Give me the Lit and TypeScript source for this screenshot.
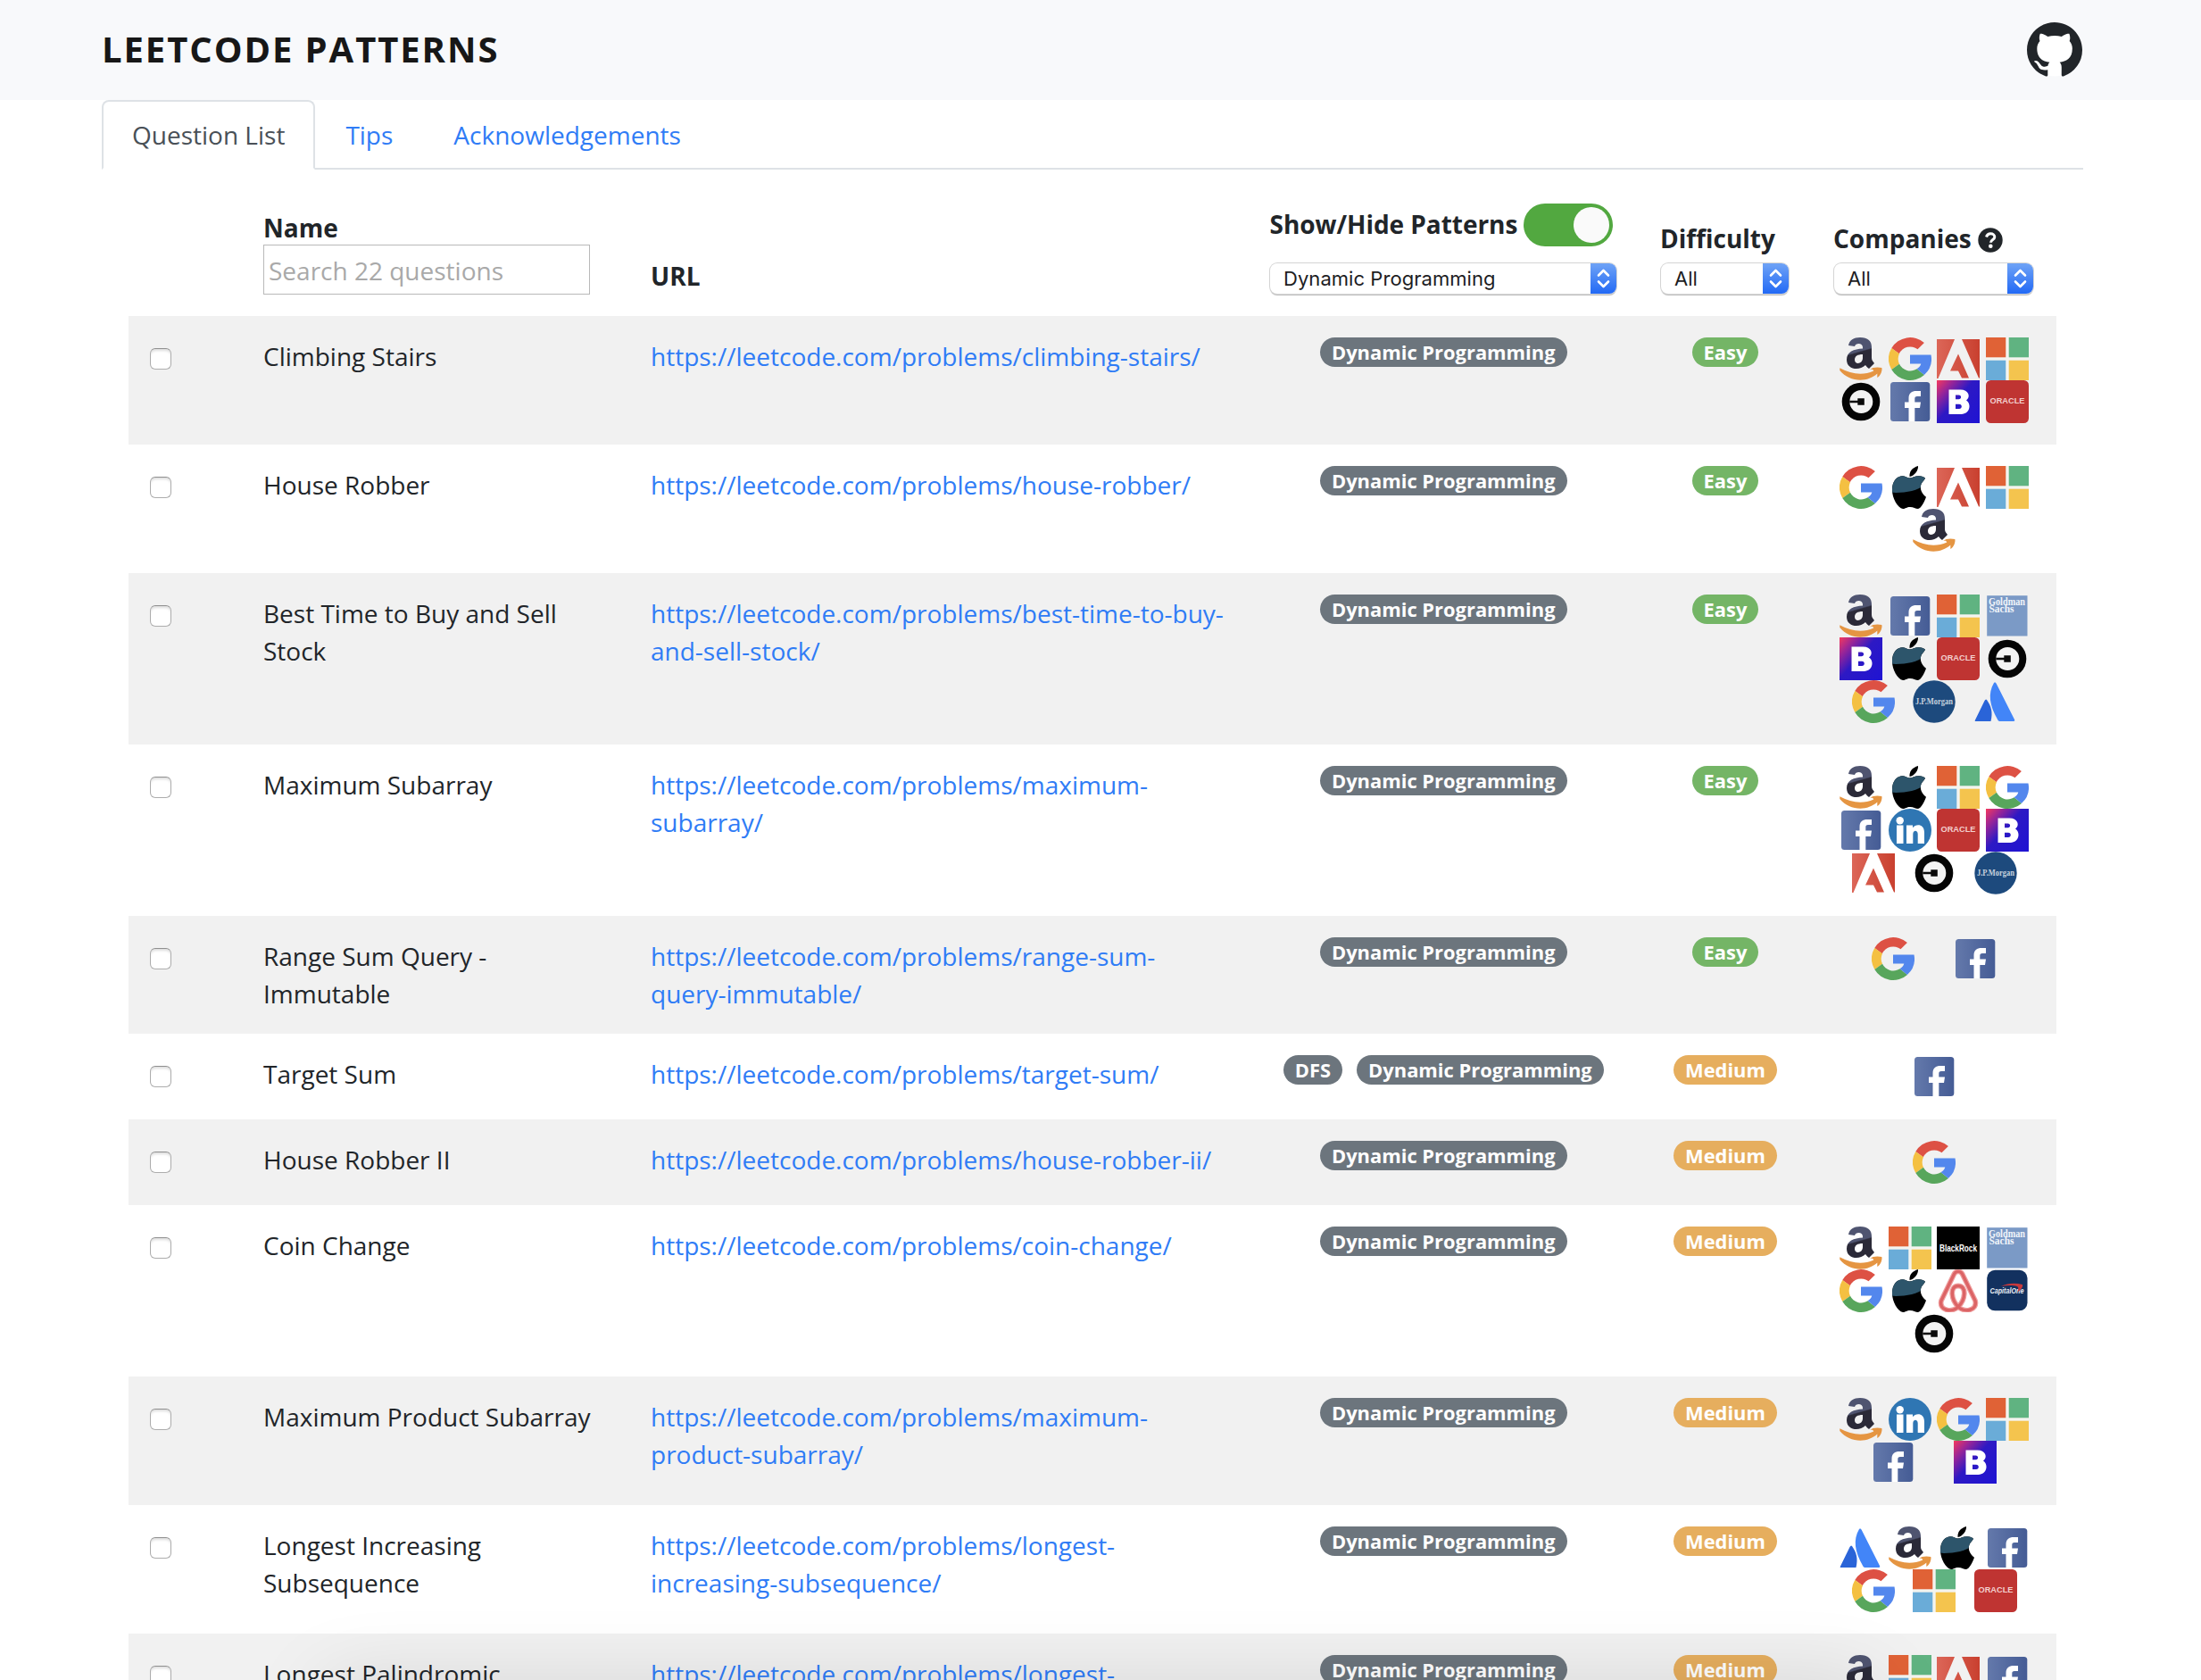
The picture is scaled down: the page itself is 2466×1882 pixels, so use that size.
import { LitElement, html, css, svg } from "lit";
import { customElement } from "lit/decorators.js";

type Row = { name: string; slug: string; patterns: string[]; level: "Easy" | "Medium"; companies: string[] };

const DP = "Dynamic Programming";
const rows: Row[] = [
  { name: "Climbing Stairs", slug: "climbing-stairs", patterns: [DP], level: "Easy", companies: ["amazon", "google", "adobe", "microsoft", "uber", "facebook", "bloomberg", "oracle"] },
  { name: "House Robber", slug: "house-robber", patterns: [DP], level: "Easy", companies: ["google", "apple", "adobe", "microsoft", "amazon"] },
  { name: "Best Time to Buy and Sell Stock", slug: "best-time-to-buy-and-sell-stock", patterns: [DP], level: "Easy", companies: ["amazon", "facebook", "microsoft", "goldman", "bloomberg", "apple", "oracle", "uber", "google", "jpmorgan", "atlassian"] },
  { name: "Maximum Subarray", slug: "maximum-subarray", patterns: [DP], level: "Easy", companies: ["amazon", "apple", "microsoft", "google", "facebook", "linkedin", "oracle", "bloomberg", "adobe", "uber", "jpmorgan"] },
  { name: "Range Sum Query - Immutable", slug: "range-sum-query-immutable", patterns: [DP], level: "Easy", companies: ["google", "facebook"] },
  { name: "Target Sum", slug: "target-sum", patterns: ["DFS", DP], level: "Medium", companies: ["facebook"] },
  { name: "House Robber II", slug: "house-robber-ii", patterns: [DP], level: "Medium", companies: ["google"] },
  { name: "Coin Change", slug: "coin-change", patterns: [DP], level: "Medium", companies: ["amazon", "microsoft", "blackrock", "goldman", "google", "apple", "airbnb", "capitalone", "uber"] },
  { name: "Maximum Product Subarray", slug: "maximum-product-subarray", patterns: [DP], level: "Medium", companies: ["amazon", "linkedin", "google", "microsoft", "facebook", "bloomberg"] },
  { name: "Longest Increasing Subsequence", slug: "longest-increasing-subsequence", patterns: [DP], level: "Medium", companies: ["atlassian", "amazon", "apple", "facebook", "google", "microsoft", "oracle"] },
  { name: "Longest Palindromic Substring", slug: "longest-palindromic-substring", patterns: [DP], level: "Medium", companies: ["amazon", "microsoft", "adobe", "facebook"] },
];

const art: Record<string, unknown> = {
  amazon: svg`
    <defs><linearGradient id="am" x1="0" y1="0" x2="0.25" y2="1"><stop offset=".52" stop-color="#4f5470"/><stop offset=".56" stop-color="#2b2a38"/></linearGradient></defs>
    <path fill="url(#am)" d="M10 9C11 3 16 0 23 0c9 0 13 4 13 11v12c0 3 2 4 3 6l-6 6c-2-1-3-3-4-4-7 7-21 5-21-6 0-9 8-12 18-12.500V11c0-5-8-5-9-1zM26 19c-6 0-9 2-9 6 0 6 9 5 9-2z"/>
    <path fill="#e59542" d="M.3 34.300c13 7 26 8.500 38 3.200l-1-1.500c-1.500-.5-2 0-3 0 2-2.800 9-3 13-2 .8 3-1 9-5 11 0-2 0-3 0-4.500C31 51 11 50 .3 37z"/>`,
  google: svg`
    <path fill="#dd5144" d="M3.300 12A24 24 0 0 1 39.900 6.100L32.500 13.300A13.600 13.600 0 0 0 11.800 18.300z"/>
    <path fill="#f4c042" d="M3.300 12L12 18.200a13.600 13.600 0 0 0 0 11.600L3.300 36a24 24 0 0 1 0-24z"/>
    <path fill="#58a65c" d="M3.300 36L12 29.700A13.600 13.600 0 0 0 31.600 35.300L40 41.900A24 24 0 0 1 3.300 36z"/>
    <path fill="#5387ed" d="M24 19.500h23.500A24 24 0 0 1 39.900 42L31.600 35.300c2.500-1.500 4-3.500 4.700-5.800H24z"/>`,
  adobe: svg`
    <defs><linearGradient id="ad"><stop stop-color="#dc6658"/><stop offset="1" stop-color="#c9402f"/></linearGradient></defs>
    <path fill="url(#ad)" d="M0 2h20L1.500 46H0zM28 2h20v43.500h-1zM24 18.500l12 27h-8l-4-8h-9z"/>`,
  microsoft: svg`
    <path fill="#f4f4ef" d="M0 0h48v48H0z"/><path fill="#e06236" d="M0 0h22.300v22.300H0z"/><path fill="#60b381" d="M25.700 0H48v22.300H25.700z"/>
    <path fill="#6aacd8" d="M0 25.700h22.300V48H0z"/><path fill="#f4c44e" d="M25.700 25.700H48V48H25.700z"/>`,
  uber: svg`
    <circle cx="24" cy="24" r="21.300" fill="#050505"/><circle cx="24.300" cy="24" r="13" fill="#f3f3f3"/>
    <path d="M20.300 20.200h7.500v7.600h-7.500v-2.500h-9v-2.600h9z" fill="#0a0a0a"/>`,
  facebook: svg`
    <defs><linearGradient id="fb"><stop stop-color="#6479ab"/><stop offset="1" stop-color="#455c95"/></linearGradient></defs>
    <rect x="2" y="2" width="44.300" height="44" rx="3.500" fill="url(#fb)"/>
    <path fill="#fff" d="M22.500 46V31H18v-6.500h4.500V20c0-5.500 3.500-8 8.500-8h5v6h-4c-2 0-2.700 1-2.700 2.500v4H36L35 31h-5.700v15z"/>`,
  bloomberg: svg`
    <defs><linearGradient id="bb" x1="0" y1="0" x2="1" y2=".9"><stop stop-color="#f5395d"/><stop offset=".22" stop-color="#9a2597"/><stop offset=".48" stop-color="#2d19c4"/><stop offset="1" stop-color="#2014d2"/></linearGradient></defs>
    <path d="M0 0h48v48H0z" fill="url(#bb)"/>
    <path fill="#fff" fill-rule="evenodd" d="M13.500 10.500h13c9 0 12 8 6.500 12 6 4 4.500 15-5.500 15.500h-14zM21 16.500v4.700h3.500c3.500 0 3.500-4.700 0-4.700zM21 26.700V32h4c3.800 0 3.800-5.300 0-5.300z"/>`,
  oracle: svg`
    <rect width="48" height="48" rx="5.500" fill="#bf3432"/>
    <text x="24" y="26.200" class="orc" textLength="39" lengthAdjust="spacingAndGlyphs">ORACLE</text>`,
  apple: svg`
    <defs><clipPath id="apc"><path d="M23 13.500c4 0 7-2.500 11-2.200 3.500.2 5.500.7 7 2.500-1 2-2 3-4 5.500-2.500 4.500-1 11 5 15.500-2 6-6 13-9 13.200-3 0-5-2-9-2s-5 2-8 2C10 47 4 36 4 27 4 16 10 11.300 15.500 11.300c3 0 5 2.200 7.500 2.200z"/></clipPath></defs>
    <g clip-path="url(#apc)"><path d="M0 0h48v48H0z"/><path fill="#2d556b" d="M0 8h48v4c-6 10-14 14-22 16-8 1.800-18 2.500-26 1.500z"/></g>
    <path d="M23.500 12C23 6 26.500 2 33 0c.5 5-4 11-9.500 12z"/>`,
  goldman: svg`
    <rect x="1.200" y="1.200" width="45.300" height="45.300" fill="#7b9ac6"/>
    <text x="3" y="11.500" class="gs" textLength="41" lengthAdjust="spacingAndGlyphs">Goldman</text>
    <text x="3.500" y="20" class="gs" textLength="28" lengthAdjust="spacingAndGlyphs">Sachs</text>`,
  jpmorgan: svg`
    <circle cx="24" cy="24" r="23.700" fill="#1d4a7d"/>
    <text x="24" y="26.600" class="jp" textLength="42" lengthAdjust="spacingAndGlyphs">J.P.Morgan</text>`,
  atlassian: svg`
    <path fill="#2a64d8" d="M14 22c5 7 7 14 4.500 24H1.500c-.8 0-1-.6-.6-1.300L11.500 23c.8-1.500 1.700-2 2.500-1z"/>
    <path fill="#4285f8" d="M22 3c1.500-1 2.200 0 2.800 1L45 44c.5 1.200.3 2-1 2H28.500c-1.200 0-1.800-.7-2.300-1.700C17 28 15 15 22 3z"/>`,
  linkedin: svg`
    <circle cx="24" cy="24" r="24" fill="#2f76b3"/><circle cx="12.700" cy="13.200" r="4.200" fill="#fff"/>
    <path fill="#fff" d="M9 18.500h7.500V39H9zM20 18.500h7v2.800c4-5 13-4 13 5.200V39h-7.300V28.500c0-5-5.400-5-5.400 0V39H20z"/>`,
  blackrock: svg`
    <path d="M0 0h48v48H0z"/><text x="24" y="27.500" class="br" textLength="42" lengthAdjust="spacingAndGlyphs">BlackRock</text>`,
  airbnb: svg`
    <path fill="none" stroke="#efa0a0" stroke-width="5.800" stroke-linejoin="round" d="M24 42C16 34 14 18.500 24 18.500S32 34 24 42C17 49 2 46 5 35L19.500 5c2-3.500 7-3.500 9 0l14.500 30c3 11-12 14-19 7z"/>
    <path fill="none" stroke="#dc6465" stroke-width="3.400" stroke-linejoin="round" d="M24 42C16 34 14 18.500 24 18.500S32 34 24 42C17 49 2 46 5 35L19.500 5c2-3.500 7-3.500 9 0l14.500 30c3 11-12 14-19 7z"/>`,
  capitalone: svg`
    <rect x="1.200" y=".8" width="45.300" height="45.500" rx="9" fill="#12315f"/>
    <text x="4.500" y="27" class="co" textLength="38" lengthAdjust="spacingAndGlyphs">CapitalOne</text>
    <path fill="#c7393c" d="M17 19c8-4 16-4 24-2 1 3-3 7-5 8 0-3 1-5-1-6-5-1.500-12-1-18 0z"/>`,
};

@customElement("app-root")
export class AppRoot extends LitElement {
  static styles = css`
    :host { display: block; height: 1882px; overflow: hidden; position: relative; background: #fff; color: #212529; font: 28px/42px "Open Sans", "Noto Sans", sans-serif; }
    * { box-sizing: border-box; }
    .top { background: #f8f9fb; height: 112px; padding: 0 133px 0 114px; display: flex; align-items: center; justify-content: space-between; }
    .title { margin: 0; padding-bottom: 2px; font-size: 40px; line-height: 60px; font-weight: 700; letter-spacing: 1.920px; color: #171717; }
    .gh { width: 62px; height: 62px; display: block; }
    .tabs { margin: 0 132px 0 114px; display: flex; border-bottom: 2px solid #dee2e6; height: 78px; }
    .tab { height: 78px; padding: 16px 32px; border: 2px solid transparent; color: #2f7cf6; text-decoration: none; white-space: nowrap; }
    .tab.on { color: #495057; background: #fff; border-color: #dee2e6 #dee2e6 #fff; border-radius: 8px 8px 0 0; }
    .table { margin: 0 162px 0 144px; }
    .row { display: grid; grid-template-columns: 127px 434px 693.500px 437.500px 194px 274px; }
    .row > div { padding: 24px; }
    .row.odd { background: #f1f1f1; }
    .head { height: 164px; font-weight: 700; align-items: end; }
    .row .stack { display: flex; flex-direction: column; align-items: flex-start; white-space: nowrap; }
    .search { font: 28px/42px "Open Sans", "Noto Sans", sans-serif; width: 366px; height: 56px; border: 1px solid #b9b9b9; padding: 4px 5px 2px; background: #fff; outline: none; margin-top: -2px; }
    .search::placeholder { color: #a9a9a9; opacity: 1; }
    .toggleline { display: flex; align-items: center; gap: 7px; height: 48px; }
    .toggle { width: 100px; height: 48px; border-radius: 24px; background: #52a840; padding: 4px; display: flex; justify-content: flex-end; }
    .knob { width: 40px; height: 40px; border-radius: 50%; background: #fafafa; }
    .lift { margin-top: -2px; letter-spacing: -.04px; }
    .sel { height: 34px; border-radius: 8px; background: #fff; box-shadow: 0 0 0 1px #d4d4d4, 0 2px 1px #bcbcbc; display: flex; font: 400 22px/34px Inter, sans-serif; letter-spacing: .05px; color: #1d1d1f; overflow: hidden; padding-left: 15px; justify-content: space-between; }
    .sel svg { width: 29px; height: 34px; display: block; }
    .sel.p { width: 388px; margin: 19px 0 1px .5px; }
    .sel.d { width: 143px; margin: 7px 0 1px 1px; }
    .sel.c { width: 223px; margin: 7px 0 1px 1px; }
    .co-h { display: flex; align-items: center; gap: 7px; }
    .help { width: 28px; height: 28px; display: block; margin-top: 4px; }
    .box { width: 24px; height: 24px; border: 1px solid #adadad; border-top-color: #8f8f8f; border-radius: 6px; background: #fff; box-shadow: inset 0 3px 3px -1px #ddd; margin-top: 12px; }
    .link { color: #2f7cf6; text-decoration: none; }
    .pills { display: flex; justify-content: center; gap: 16px; align-items: flex-start; }
    .pill { height: 33px; border-radius: 17px; padding: 5.500px 13px; font-size: 21.900px; line-height: 22px; font-weight: 700; color: #fff; background: #6c757d; white-space: nowrap; }
    .pill.easy { background: #74b566; }
    .pill.medium { background: #e6ae5e; }
    .icons { display: flex; flex-wrap: wrap; justify-content: space-evenly; align-content: flex-start; }
    .icons svg { width: 48px; height: 48px; display: block; }
    .orc { font: 700 9.500px "Liberation Sans", sans-serif; fill: #f3cfce; text-anchor: middle; }
    .gs { font: 700 12.500px "Liberation Serif", serif; fill: #f1f5fa; }
    .jp { font: 700 11px "Liberation Serif", serif; fill: #c7d2de; text-anchor: middle; }
    .br { font: 700 10px "Liberation Sans", sans-serif; fill: #fff; text-anchor: middle; }
    .co { font: italic 700 9.500px "Liberation Sans", sans-serif; fill: #e9eef5; }
    .shade { position: absolute; left: 0; right: 0; bottom: -60px; height: 60px; pointer-events: none; }
    .shade::after { content: ""; position: absolute; left: 380px; right: 380px; top: 20px; bottom: 0; box-shadow: 0 0 90px 15px rgba(0,0,0,.13); }
  `;

  private select(kind: string, text: string) {
    return html`<div class="sel ${kind}"><span>${text}</span>
      <svg viewBox="0 0 29 34"><defs><linearGradient id="sg" x1="0" y1="0" x2="0" y2="1"><stop stop-color="#6fa3f6"/><stop offset="1" stop-color="#2269f5"/></linearGradient></defs>
      <path d="M0 0h29v34H0z" fill="url(#sg)"/><path d="M9 13.500l5.500-5.500 5.500 5.500M9 20.500l5.500 5.500 5.500-5.500" fill="none" stroke="#fff" stroke-width="2.600" stroke-linecap="round" stroke-linejoin="round"/></svg></div>`;
  }

  render() {
    return html`
      <header class="top">
        <h1 class="title">LEETCODE PATTERNS</h1>
        <svg class="gh" viewBox="0 0 16 16"><circle cx="8" cy="8" r="7.600" fill="#fff"/><path fill="#212529" d="M8 0C3.580 0 0 3.580 0 8c0 3.540 2.290 6.530 5.470 7.590.4.070.55-.17.55-.38 0-.19-.01-.82-.01-1.490-2.010.37-2.530-.49-2.690-.94-.09-.23-.48-.94-.82-1.130-.28-.15-.68-.52-.01-.53.63-.01 1.080.58 1.230.82.72 1.210 1.870.87 2.330.66.070-.52.28-.87.51-1.070-1.780-.2-3.640-.89-3.640-3.950 0-.87.31-1.590.82-2.150-.08-.2-.36-1.020.08-2.120 0 0 .67-.21 2.200.82.64-.18 1.320-.27 2-.27s1.360.09 2 .27c1.530-1.040 2.200-.82 2.200-.82.44 1.100.16 1.920.08 2.120.51.56.82 1.270.82 2.150 0 3.070-1.870 3.750-3.650 3.950.29.25.54.73.54 1.480 0 1.070-.01 1.930-.01 2.200 0 .21.15.46.55.38A8.010 8.010 0 0 0 16 8c0-4.420-3.580-8-8-8z"/></svg>
      </header>
      <nav class="tabs"><a class="tab on">Question List</a><a class="tab">Tips</a><a class="tab">Acknowledgements</a></nav>
      <main class="table">
        <div class="row head">
          <div></div>
          <div class="stack"><span>Name</span><input class="search" placeholder="Search 22 questions"></div>
          <div>URL</div>
          <div class="stack"><span class="toggleline"><span class="lift">Show/Hide Patterns</span><span class="toggle"><span class="knob"></span></span></span>${this.select("p", DP)}</div>
          <div class="stack"><span>Difficulty</span>${this.select("d", "All")}</div>
          <div class="stack"><span class="co-h">Companies
            <svg class="help" viewBox="0 0 28 28"><circle cx="14" cy="14" r="13.700" fill="#212529"/><path d="M9.500 10.500c.7-2.500 2.300-3.700 4.700-3.700 2.700 0 4.600 1.500 4.600 3.800 0 3.100-4.300 2.900-4.300 6.100" fill="none" stroke="#fff" stroke-width="3"/><circle cx="14.300" cy="20.800" r="2.300" fill="#fff"/></svg></span>${this.select("c", "All")}</div>
        </div>
        ${rows.map((r, i) => html`<div class="row ${i % 2 ? "" : "odd"}">
          <div><div class="box"></div></div>
          <div>${r.name}</div>
          <div><a class="link">https://leetcode.com/problems/${r.slug}/</a></div>
          <div class="pills">${r.patterns.map((p) => html`<span class="pill">${p}</span>`)}</div>
          <div class="pills"><span class="pill ${r.level.toLowerCase()}">${r.level}</span></div>
          <div class="icons">${r.companies.map((c) => html`<svg viewBox="0 0 48 48">${art[c]}</svg>`)}</div>
        </div>`)}
      </main>
      <div class="shade"></div>`;
  }
}
